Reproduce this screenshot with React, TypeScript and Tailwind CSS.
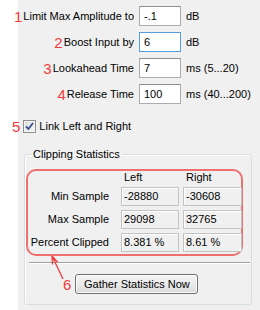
import React from "react"

function Num({ n }: { n: string }) {
  return <span className="text-[15px] leading-none text-[#ee3b3b]">{n}</span>
}

function Field({ value, focused }: { value: string; focused?: boolean }) {
  return (
    <div
      className={`flex h-5 w-[42px] items-center border bg-white pl-[4px] ${
        focused ? "border-[#569de5]" : "border-[#abadb3] border-t-[#8e8f8f]"
      }`}
    >
      {value}
    </div>
  )
}

function Cell({ value }: { value: string }) {
  return (
    <div className="flex h-[19px] items-center border border-[#c3c3c3] bg-[#f0f0f0] pl-[2px] shadow-[inset_1px_1px_0_#ffffff]">
      {value}
    </div>
  )
}

const rows = [
  { n: "1", label: "Limit Max Amplitude to", value: "-.1", unit: "dB" },
  { n: "2", label: "Boost Input by", value: "6", unit: "dB", focused: true },
  { n: "3", label: "Lookahead Time", value: "7", unit: "ms (5...20)" },
  { n: "4", label: "Release Time", value: "100", unit: "ms (40...200)" },
]

const stats = [
  { label: "Min Sample", left: "-28880", right: "-30608" },
  { label: "Max Sample", left: "29098", right: "32765" },
  { label: "Percent Clipped", left: "8.381 %", right: "8.61 %" },
]

export default function App() {
  return (
    <div className="relative h-[310px] w-[260px] overflow-hidden bg-[linear-gradient(to_right,#ffffff_18px,#f0f0f0_18px)] font-[family-name:Liberation_Sans,Arial,sans-serif] text-[11px] leading-[13px] text-black">
      <div className="grid grid-cols-[134px_42px_auto] items-center gap-x-[5px] gap-y-[6px] pt-[6px]">
        {rows.map((r) => (
          <React.Fragment key={r.n}>
            <div className="flex items-center justify-end gap-[1px] whitespace-nowrap">
              <Num n={r.n} />
              <span>{r.label}</span>
            </div>
            <Field value={r.value} focused={r.focused} />
            <span className="whitespace-nowrap">{r.unit}</span>
          </React.Fragment>
        ))}
      </div>

      <div className="mt-[15px] flex h-[15px] items-center pl-[12px]">
        <Num n="5" />
        <div className="ml-[3px] flex h-[13px] w-[13px] items-center justify-center border border-[#8f8f8f] bg-gradient-to-br from-[#dcdcdc] to-[#f8f8f8] shadow-[inset_0_0_0_1px_#f4f4f4]">
          <svg width="9" height="9" viewBox="0 0 9 9">
            <path d="M1 4.5 L3.5 7 L8 1" fill="none" stroke="#3a4f8c" strokeWidth="1.8" />
          </svg>
        </div>
        <span className="ml-[3px]">Link Left and Right</span>
      </div>

      <fieldset className="ml-[24px] mt-[14px] w-[228px] rounded-[3px] border border-[#d5dfe5] pb-[10px] shadow-[inset_1px_1px_0_#ffffff]">
        <legend className="ml-[6px] px-[2px] leading-[13px]">Clipping Statistics</legend>

        <div className="ml-px mt-[8px] w-[217px] rounded-[10px] border-2 border-[#ef6f6f] pb-[2px]">
          <div className="grid grid-cols-[89px_58px_59px] gap-x-[4px] gap-y-[4px]">
            <div className="h-[12px]" />
            <div className="h-[12px] pl-[3px]">Left</div>
            <div className="h-[12px] pl-[3px]">Right</div>
            {stats.map((s) => (
              <React.Fragment key={s.label}>
                <div className="flex items-center justify-end pr-2 whitespace-nowrap">{s.label}</div>
                <Cell value={s.left} />
                <Cell value={s.right} />
              </React.Fragment>
            ))}
          </div>
        </div>

        <div className="ml-[4px] mr-px mt-[6px] h-[2px] border-t border-b border-t-[#a0a0a0] border-b-white" />

        <div className="mt-[10px] flex items-center gap-[4px] pl-[38px]">
          <Num n="6" />
          <button className="flex h-5 w-[123px] items-center justify-center rounded-[3px] border border-[#707070] bg-gradient-to-b from-[#f4f4f4] via-[#ebebeb] to-[#d9d9d9] shadow-[inset_0_0_0_1px_#fcfcfc]">
            Gather Statistics Now
          </button>
        </div>
      </fieldset>

      <svg className="absolute left-[46px] top-[252px]" width="20" height="32" viewBox="0 0 20 32">
        <path d="M17 27 L6 4 M6 4 L6.5 12.5 M6 4 L11.5 10" fill="none" stroke="#ee3b3b" strokeWidth="1.3" />
      </svg>
    </div>
  )
}
